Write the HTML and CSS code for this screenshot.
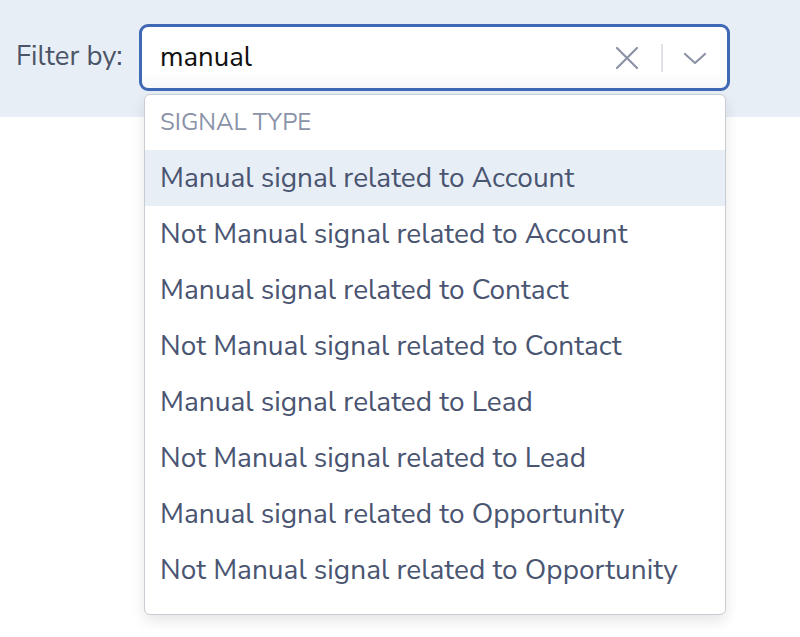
FILE: index.html
```html
<!DOCTYPE html>
<html>
<head>
<meta charset="utf-8">
<link rel="stylesheet" href="styles.css">
</head>
<body>
<div class="band">
  <span class="label">Filter by:</span>
  <div class="select">
    <span class="value">manual</span>
    <div class="controls">
      <svg class="clear" width="24" height="24" viewBox="0 0 24 24"><path d="M2 2 L22 22 M22 2 L2 22" stroke="#8c93a6" stroke-width="2.2" fill="none" stroke-linecap="round"/></svg>
      <span class="sep"></span>
      <svg class="chev" width="24" height="14" viewBox="0 0 24 14"><path d="M2 3 L12 12 L22 3" stroke="#8c93a6" stroke-width="2.2" fill="none" stroke-linecap="round" stroke-linejoin="round"/></svg>
    </div>
  </div>
</div>
<div class="menu">
  <div class="group">SIGNAL TYPE</div>
  <div class="opt active">Manual signal related to Account</div>
  <div class="opt">Not Manual signal related to Account</div>
  <div class="opt">Manual signal related to Contact</div>
  <div class="opt">Not Manual signal related to Contact</div>
  <div class="opt">Manual signal related to Lead</div>
  <div class="opt">Not Manual signal related to Lead</div>
  <div class="opt">Manual signal related to Opportunity</div>
  <div class="opt">Not Manual signal related to Opportunity</div>
</div>
</body>
</html>
```
FILE: styles.css
```css
html, body { margin: 0; padding: 0; background: #fff; }
body { font-family: "Nunito Sans", "Open Sans", sans-serif; width: 800px; height: 637px; position: relative; overflow: hidden; }
.band { height: 117px; background: #e8eef6; display: flex; align-items: flex-start; padding: 24px 0 0 16px; box-sizing: border-box; }
.label { font-size: 27.5px; color: #4b5567; line-height: 65px; width: 123px; flex: none; }
.select { width: 591px; height: 67px; box-sizing: border-box; border: 3px solid #3f69b4; border-radius: 9px; background: linear-gradient(#fff 75%, #f6f7f9); display: flex; align-items: center; padding: 0 18px 0 18px; }
.value { flex: 1; font-size: 27.5px; color: #111; margin-top: -2px; }
.controls { display: flex; align-items: center; gap: 0; }
.clear { margin-right: 22px; }
.sep { width: 2px; height: 28px; background: #dfe3e9; margin-right: 20px; }
.chev { margin-right: 2px; }
.menu { position: absolute; left: 144px; top: 94px; width: 582px; height: 521px; box-sizing: border-box; border: 1px solid #c9ccd2; border-radius: 6px; background: #fff; box-shadow: 0 6px 14px rgba(0,0,0,0.1); padding-top: 0; }
.group { height: 55px; line-height: 55px; padding-left: 15px; font-size: 24px; color: #8a93a8; }
.opt { height: 56px; line-height: 56px; padding-left: 15px; font-size: 28px; color: #4a5572; white-space: nowrap; }
.opt.active { background: #e8eef5; }
```
